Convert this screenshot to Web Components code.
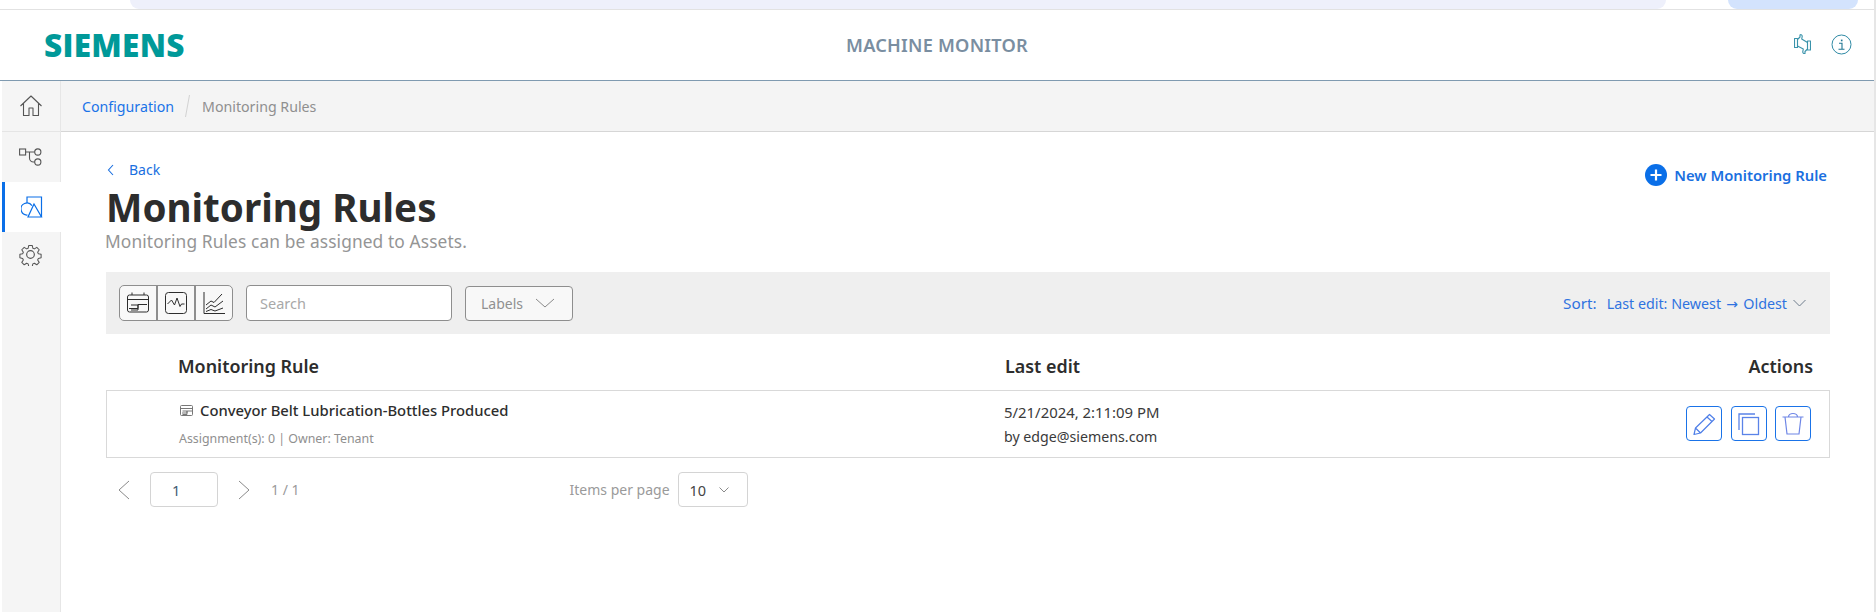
<!DOCTYPE html>
<html lang="en"><head><meta charset="utf-8"><title>Machine Monitor</title>
<style>
html,body{margin:0;height:100%;background:#fff;overflow:hidden}
body{font-family:"Noto Sans","Open Sans",sans-serif;color:#2d2d2d}
</style></head><body>
<mm-app></mm-app>
<script>
const def=(name,html)=>{customElements.define(name,class extends HTMLElement{connectedCallback(){if(this.shadowRoot)return;this.attachShadow({mode:'open'}).innerHTML=html;}});};
const svg=(w,h,vb,body)=>`<svg width="${w}" height="${h}" viewBox="${vb}" fill="none">${body}</svg>`;

def('mm-topstrip',`<style>
:host{display:flex;height:9px;border-bottom:1px solid #e2e2e2;padding:0 16px 0 130px;gap:62px;background:#fff}
i{display:block;height:9px;border-radius:0 0 16px 16px}
.a{flex:1;background:#eef0fb}.b{width:130px;background:#d3e3fd}
</style><i class="a"></i><i class="b"></i>`);

def('mm-header',`<style>
:host{display:grid;grid-template-columns:1fr auto 1fr;align-items:center;height:70px;border-bottom:1px solid #7f9ab0;padding:0 22px;background:#fff}
.logo{font:800 31.5px/1 "Open Sans",sans-serif;color:#099;letter-spacing:.3px;margin:0 0 0 22px}
.t{font:600 18.2px "Noto Sans",sans-serif;color:#7a8ea1;letter-spacing:.22px;margin-top:-1px}
.r{display:flex;justify-content:flex-end;gap:20px;align-items:center;margin-top:-2px}
</style><div class="logo">SIEMENS</div><div class="t">MACHINE MONITOR</div><div class="r">
${svg(17,20,'0 0 17 20',`<g stroke="#3a93ab" stroke-width="1.150" stroke-linejoin="round"><path d="M.5 4.500h3v9h-3zM3.500 5.500 6 3V1c1-.8 2.300 0 2.200 1.500L7.700 5l5.800 3.500"/><path d="M13.500 7h3v9h-3zM13.500 15 11 17.500v2c-1 .5-2.300-.3-2.200-1.800l.5-2.700-5.800-3"/></g>`)}
${svg(21,21,'0 0 21 21',`<circle cx="10.500" cy="10.500" r="9.500" stroke="#2f8aa5"/><g stroke="#1f7692" stroke-width="1.100"><path d="M8 9.200h3v6M7.500 15.200h6"/></g><rect x="9.900" y="5.600" width="1.600" height="1.700" fill="#1f7692"/>`)}
</div>`);

const ico={
home:svg(24,24,'0 0 24 24',`<path d="M1.500 12 12 2l10.500 10M4.500 9.500V21.500h5.500V14h4v7.500h5.500V9.500" stroke="#555" stroke-width="1.100" stroke-linejoin="round"/>`),
flow:svg(24,20,'0 0 24 20',`<g stroke="#555" stroke-width="1.100"><rect x=".6" y="2" width="6" height="6"/><circle cx="18.800" cy="5" r="3.100"/><circle cx="18.800" cy="15" r="3.100"/><path d="M6.600 5h9M10.500 5v6a4 4 0 0 0 4 4h1.200"/></g>`),
shapes:svg(22,22,'0 0 22 22',`<g stroke="#0a6fe8" stroke-width="1.200"><path d="M6 7V1h14.500v20"/><path d="M11 9.700A6 6 0 1 0 6.500 19"/><path d="M13 8 7 21h13.500z"/></g>`),
gear:svg(23,23,'0 0 24 24',`<g stroke="#555" stroke-width="1.200" stroke-linejoin="round"><circle cx="12" cy="12" r="4"/><path d="M10 1.500h4l.7 3.200 1.800.8 2.800-1.800 2.800 2.800-1.800 2.800.8 1.800 3.200.7v4l-3.200.7-.8 1.800 1.800 2.800-2.800 2.800-2.800-1.800-1.800.8-.7 3.200h-4l-.7-3.200-1.800-.8-2.800 1.800-2.800-2.800 1.800-2.800-.8-1.800-3.200-.7v-4l3.200-.7.8-1.800-1.800-2.800 2.800-2.800 2.800 1.800 1.800-.8z" transform="translate(1.200 1.200) scale(.9)"/></g>`)
};

def('mm-sidebar',`<style>
:host{display:block;width:58px;background:#f5f5f5;border-right:1px solid #e6e6e6;margin-left:2px;flex:none}
div{height:49.500px;display:flex;align-items:center;justify-content:center;box-sizing:border-box;padding-right:1px}
.h{border-bottom:1px solid #e5e5e5;height:51px}.f{height:50px}
.on{background:#fff;border-left:3px solid #0a6fe8;padding-right:3px;margin-right:-1px}
.g{height:46px}
</style><div class="h">${ico.home}</div><div class="f">${ico.flow}</div><div class="on">${ico.shapes}</div><div class="g">${ico.gear}</div>`);

def('mm-breadcrumb',`<style>
:host{display:flex;align-items:center;height:50px;background:#f4f4f4;border-bottom:1px solid #d6d6d6;padding-left:21px;font:14.200px "Noto Sans",sans-serif}
a{color:#1a73e8}span{color:#8f8f8f}
svg{margin:0 11px 0 10px}
</style><a>Configuration</a>${svg(7,24,'0 0 7 24',`<path d="M5.500 1 1.500 23" stroke="#d2d2d2"/>`)}<span>Monitoring Rules</span>`);

def('mm-pagehead',`<style>
:host{display:flex;justify-content:space-between;align-items:flex-start;padding-top:27px}
.back{display:flex;align-items:center;gap:14px;font:14px/22px "Noto Sans",sans-serif;color:#1a6fe0;padding-left:1px}
h1{font:700 38.600px/44px "Noto Sans",sans-serif;margin:4px 0 0 0;color:#2d2d2d}
p{font:17.350px/22px "Noto Sans",sans-serif;color:#959595;margin:1px 0 0 -1px;letter-spacing:.1px}
.new{display:flex;align-items:center;gap:7px;color:#1a6fe0;font:600 14.800px/22px "Noto Sans",sans-serif;margin:5px 3px 0 0}
</style><div><div class="back">${svg(8,12,'0 0 8 12',`<path d="M6 1 1.500 6 6 11" stroke="#1a6fe0" stroke-width="1.100"/>`)}<span>Back</span></div><h1>Monitoring Rules</h1><p>Monitoring Rules can be assigned to Assets.</p></div>
<div class="new">${svg(22,22,'0 0 22 22',`<circle cx="11" cy="11" r="11" fill="#0a6fe8"/><path d="M5.500 11h11M11 5.500v11" stroke="#fff" stroke-width="2.200"/>`)}<span>New Monitoring Rule</span></div>`);

def('mm-toolbar',`<style>
:host{display:flex;align-items:center;height:62px;background:#efefef;margin-top:20px;padding:0 24px 0 13px;font:14px "Noto Sans",sans-serif}
.grp{display:flex;height:36px;border:1px solid #8e8e8e;border-radius:5px;background:#f8f8f8;box-sizing:border-box;width:114px}
.grp div{flex:1;display:flex;align-items:center;justify-content:center;border-left:2px solid #8e8e8e}
.grp div:first-child{border-left:0}
.search{width:206px;height:36px;box-sizing:border-box;border:1px solid #8e8e8e;border-radius:4px;background:#fff;margin-left:13px;color:#a8a8a8;padding-left:13px;display:flex;align-items:center;font-size:14.500px}
.lab{width:108px;height:35px;box-sizing:border-box;border:1px solid #8e8e8e;border-radius:4px;background:#f8f8f8;margin-left:13px;color:#909090;padding-left:15px;display:flex;align-items:center;gap:12px}
.sort{margin-left:auto;display:flex;align-items:center;color:#2f73e0;font-size:14.300px}
.sort b{font-weight:400;margin-right:10px;font-size:15.300px}
.sort em{font:14px "DejaVu Sans",sans-serif;margin:0 1.500px}
.sort svg{margin-left:6px}
</style><div class="grp"><div>${svg(24,24,'0 0 24 24',`<g stroke="#2d2d2d" stroke-width="1"><rect x="1.500" y="4" width="21" height="17" rx="2"/><path d="M1.500 8.500h21M6 1.500V4M18 1.500V4M3 17.500h9v-4h9M5 14h7v5H5"/></g>`)}</div><div>${svg(24,24,'0 0 24 24',`<rect x="1.500" y="1.500" width="21" height="21" rx="3" stroke="#2d2d2d" stroke-width="1"/><path d="M3.500 13 7.500 9l3 5 2.500-7 3 8.500 1.500-2.500h3" stroke="#2d2d2d" stroke-width="1"/>`)}</div><div>${svg(24,24,'0 0 24 24',`<g stroke="#2d2d2d" stroke-width="1"><path d="M2 1v21.500h21"/><path d="M4 14l5-4 3 1.500L20 3M4 18l5-4 4 2 8-6M4 20.500l5-2 4 1.500 8-3"/></g>`)}</div></div>
<div class="search">Search</div><div class="lab">Labels ${svg(20,10,'0 0 20 10',`<path d="M1 1l9 8 9-8" stroke="#8a8a8a"/>`)}</div>
<div class="sort"><b>Sort:</b><span>Last edit: Newest <em>→</em> Oldest</span>${svg(13,8,'0 0 13 8',`<path d="M.5 1 6.500 7l6-6" stroke="#6f7d8c"/>`)}</div>`);

def('mm-table',`<style>
:host{display:block;margin-top:19px}
.g{display:grid}
.hd{font:600 17.900px/26px "Noto Sans",sans-serif;height:37px;color:#2d2d2d;padding-right:17px;box-sizing:border-box;grid-template-columns:72px 1fr 808px}
.hd>:first-child{grid-column:2}
.hd .ac{display:flex;justify-content:space-between}
.row{height:68px;border:1px solid #d9d9d9;box-sizing:border-box;padding-right:18px;grid-template-columns:72px 1fr 807px}
.row>:first-child{grid-column:2}
.n{display:flex;align-items:center;gap:6px;font:500 14.800px/20px "Noto Sans",sans-serif;margin-top:9px}
.m{font:12.400px/18px "Noto Sans",sans-serif;color:#8f8f8f;margin-top:10px}
.e{display:flex;justify-content:space-between}
.d{font:14.900px/24px "Noto Sans",sans-serif;color:#3a3a3a;margin-top:9px}
.d small{font-size:14.200px}
.acts{display:flex;gap:8px;margin-top:15px}
.b{width:36px;height:35px;border:1px solid #1a73e8;border-radius:4px;display:flex;align-items:center;justify-content:center;box-sizing:border-box}
.b:first-child{margin-right:1px}
</style>
<div class="g hd"><div>Monitoring Rule</div><div class="ac"><span>Last edit</span><span>Actions</span></div></div>
<div class="g row"><div><div class="n">${svg(15,14,'0 0 14 14',`<g stroke="#777"><rect x="1" y="2.500" width="12" height="10" rx="1"/><path d="M1 5.500h12M2.500 10h5V8h5M3 8h4.500v3.500H3"/></g>`)}<span>Conveyor Belt Lubrication-Bottles Produced</span></div><div class="m">Assignment(s): 0 | Owner: Tenant</div></div>
<div class="e"><div class="d">5/21/2024, 2:11:09 PM<br><small>by edge@siemens.com</small></div>
<div class="acts"><div class="b">${svg(24,24,'0 0 24 24',`<path d="M2 22.500l1.500-6.500L17.500 2.500l5 4.500L8.500 21zM3.500 16l5 5M15 5l5 4.500" stroke="#4f7fe8" stroke-width="1.200" stroke-linejoin="round"/>`)}</div><div class="b">${svg(24,24,'0 0 24 24',`<g stroke="#5a83e8" stroke-width="1.300"><path d="M18 2H2v16"/><rect x="5.500" y="5.500" width="16" height="17"/></g>`)}</div><div class="b">${svg(24,24,'0 0 24 24',`<g stroke="#6e86e6" stroke-width="1.200"><path d="M1.500 5h21M4 5l2 17h12l2-17M7.500 5c0-2 2-3.500 4.500-3.500s4.500 1.500 4.500 3.500"/></g>`)}</div></div></div></div>`);

def('mm-pager',`<style>
:host{display:flex;align-items:center;height:35px;margin-top:14px;font:14px "Noto Sans",sans-serif;color:#9a9a9a;padding-left:11px}
.p{width:68px;height:35px;box-sizing:border-box;border:1px solid #d4d4d4;border-radius:4px;display:flex;align-items:center;padding-left:21px;color:#3f5a70;margin:0 20px 0 20px;font-size:14.500px}
.t{margin-left:21px}
.i{margin-left:270px;margin-right:8px}
.s{width:70px;height:35px;box-sizing:border-box;border:1px solid #d4d4d4;border-radius:4px;display:flex;align-items:center;gap:13px;padding-left:11px;color:#444;font-size:14.500px}
svg{flex:none}
</style>${svg(13,20,'0 0 13 20',`<path d="M12 1 2 10l10 9" stroke="#8a8a8a"/>`)}<div class="p">1</div>${svg(12,20,'0 0 12 20',`<path d="M1 1l10 9-10 9" stroke="#8a8a8a"/>`)}<span class="t">1 / 1</span><span class="i">Items per page</span><div class="s">10 ${svg(10,6,'0 0 10 6',`<path d="M.5.500 5 5 9.500.5" stroke="#8a8a8a"/>`)}</div>`);

def('mm-app',`<style>
:host{display:block;height:612px;border-right:2px solid #e6e6e6;box-sizing:border-box}
.b{display:flex;height:531px}
.c{flex:1;min-width:0;display:flex;flex-direction:column}
.pg{padding:0 44px 0 45px}
</style><mm-topstrip></mm-topstrip><mm-header></mm-header>
<div class="b"><mm-sidebar></mm-sidebar><div class="c"><mm-breadcrumb></mm-breadcrumb><div class="pg"><mm-pagehead></mm-pagehead><mm-toolbar></mm-toolbar><mm-table></mm-table><mm-pager></mm-pager></div></div></div>`);
</script></body></html>
